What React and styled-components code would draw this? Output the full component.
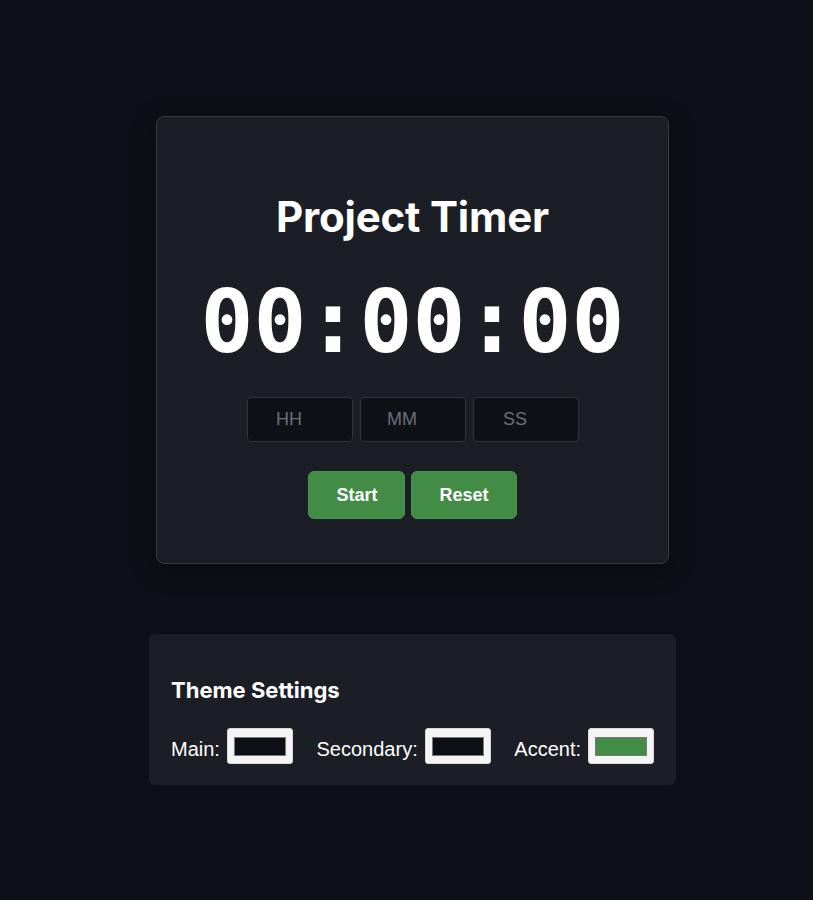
import React, { useState } from "react";
import styled, { createGlobalStyle } from "styled-components";

const GlobalStyle = createGlobalStyle`
	html, body {
		margin: 0;
		padding: 0;
		background: #0d1117;
	}
	body {
		font-family: "Liberation Sans", Arial, sans-serif;
		color: #ffffff;
	}
`;

const pad = (n) => String(n).padStart(2, "0");

const App = () => {
	const [seconds, setSeconds] = useState(0);
	const [fields, setFields] = useState({ h: "", m: "", s: "" });
	const [theme] = useState({
		main: "#0d1117",
		secondary: "#1b1e24",
		accent: "#428c46",
	});

	const h = Math.floor(seconds / 3600);
	const m = Math.floor((seconds % 3600) / 60);
	const s = seconds % 60;

	const onField = (key) => (e) =>
		setFields({ ...fields, [key]: e.target.value.replace(/\D/g, "") });

	return (
		<Page>
			<GlobalStyle />
			<TimerCard>
				<Title>Project Timer</Title>
				<Clock>
					{pad(h)}:{pad(m)}:{pad(s)}
				</Clock>
				<Fields>
					<TimeInput placeholder="HH" value={fields.h} onChange={onField("h")} />
					<TimeInput placeholder="MM" value={fields.m} onChange={onField("m")} />
					<TimeInput placeholder="SS" value={fields.s} onChange={onField("s")} />
				</Fields>
				<Buttons>
					<Button $accent={theme.accent}>Start</Button>
					<Button $accent={theme.accent} onClick={() => setSeconds(0)}>
						Reset
					</Button>
				</Buttons>
			</TimerCard>

			<ThemePanel>
				<PanelTitle>Theme Settings</PanelTitle>
				<Swatches>
					<SwatchLabel>
						<LabelText>Main:</LabelText>
						<Swatch>
							<SwatchFill $color={theme.main} />
						</Swatch>
					</SwatchLabel>
					<SwatchLabel>
						<LabelText>Secondary:</LabelText>
						<Swatch>
							<SwatchFill $color={theme.main} />
						</Swatch>
					</SwatchLabel>
					<SwatchLabel>
						<LabelText>Accent:</LabelText>
						<Swatch>
							<SwatchFill $color={theme.accent} />
						</Swatch>
					</SwatchLabel>
				</Swatches>
			</ThemePanel>
		</Page>
	);
};

const Page = styled.div`
	display: flex;
	flex-direction: column;
	align-items: center;
	padding: 116px 0 0 12px;
	min-height: 100vh;
	box-sizing: border-box;
`;
const TimerCard = styled.div`
	width: 513px;
	height: 448px;
	box-sizing: border-box;
	display: flex;
	flex-direction: column;
	align-items: center;
	padding-top: 74px;
	background: #1b1e24;
	border: 1px solid #353a42;
	border-radius: 8px;
	box-shadow: 0 6px 24px rgba(0, 0, 0, 0.45);
`;
const Title = styled.h1`
	margin: 0;
	font-family: Inter, "Noto Sans", sans-serif;
	font-size: 42px;
	font-weight: 700;
	line-height: 52px;
	letter-spacing: -0.2px;
	color: #ffffff;
`;
const Clock = styled.div`
	margin-top: 35px;
	font-family: "DejaVu Sans Mono", "Liberation Mono", monospace;
	font-size: 88px;
	font-weight: 700;
	line-height: 88px;
	font-variant-numeric: slashed-zero;
	color: #ffffff;
`;
const Fields = styled.div`
	display: flex;
	gap: 7px;
	margin-top: 31px;
`;
const TimeInput = styled.input`
	width: 106px;
	height: 45px;
	box-sizing: border-box;
	padding: 0 29px 0 8px;
	text-align: center;
	background: #0e1116;
	border: 1px solid #30353d;
	border-radius: 4px;
	color: #e6e6e6;
	font-family: "Liberation Sans", Arial, sans-serif;
	font-size: 18px;
	outline: none;
	&::placeholder {
		color: #6b6f76;
	}
`;
const Buttons = styled.div`
	display: flex;
	gap: 6px;
	margin-top: 29px;
`;
const Button = styled.button`
	height: 48px;
	padding: 0 27px;
	background: ${(props) => props.$accent};
	border: 1px solid #4b9250;
	border-radius: 6px;
	color: #ffffff;
	font-family: "Liberation Sans", Arial, sans-serif;
	font-size: 18px;
	font-weight: 700;
	cursor: pointer;
`;
const ThemePanel = styled.div`
	width: 527px;
	box-sizing: border-box;
	margin-top: 70px;
	padding: 40px 22px 21px;
	background: #1b1e24;
	border-radius: 6px;
`;
const PanelTitle = styled.h3`
	margin: 0;
	font-family: Inter, "Noto Sans", sans-serif;
	font-size: 22px;
	font-weight: 700;
	line-height: 32px;
`;
const Swatches = styled.div`
	display: flex;
	justify-content: space-between;
	margin-top: 22px;
`;
const SwatchLabel = styled.label`
	display: flex;
	align-items: center;
	gap: 7px;
	font-size: 20px;
	color: #ffffff;
`;
const LabelText = styled.span`
	padding-top: 7px;
`;
const Swatch = styled.span`
	display: flex;
	width: 66px;
	height: 36px;
	box-sizing: border-box;
	padding: 8px 6px 7px;
	background: #f4f4f4;
	border: 1px solid #d8d8d8;
	border-radius: 3px;
`;
const SwatchFill = styled.span`
	flex: 1;
	background: ${(props) => props.$color};
	border: 1px solid #7a7a7a;
`;

export default App;
